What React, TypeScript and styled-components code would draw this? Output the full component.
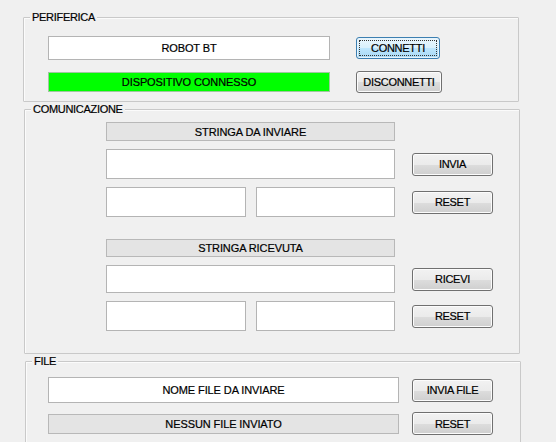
import React from "react";
import styled, { createGlobalStyle, css } from "styled-components";

const Global = createGlobalStyle`
  html, body { margin: 0; padding: 0; background: #f0f0f0; }
  body { font-family: "Liberation Sans", Arial, sans-serif; font-size: 11px; color: #000; }
`;

const Page = styled.div`
  width: 556px;
  height: 442px;
  overflow: hidden;
  padding: 17px 0 0 23px;
  box-sizing: border-box;
  display: flex;
  flex-direction: column;
  gap: 7px;
`;

const Frame = styled.section<{ $w: number; $h: number; $shift?: number }>`
  position: relative;
  flex-shrink: 0;
  box-sizing: border-box;
  width: ${(p) => p.$w}px;
  height: ${(p) => p.$h}px;
  margin-left: ${(p) => p.$shift ?? 0}px;
  border: 1px solid #c9c9c9;
  box-shadow: inset 1px 1px 0 #fbfbfb;
  border-radius: 1px;
`;

const Legend = styled.span`
  position: absolute;
  top: -7px;
  left: 6px;
  padding: 0 2px;
  background: #f0f0f0;
  line-height: 13px;
  font-size: 11px;
  letter-spacing: -0.3px;
  -webkit-text-stroke: 0.2px #000;
`;

const Grid = styled.div<{ $cols: string; $gap: number; $pt: number; $pl: number; $rowGap: number }>`
  display: grid;
  grid-template-columns: ${(p) => p.$cols};
  column-gap: ${(p) => p.$gap}px;
  row-gap: ${(p) => p.$rowGap}px;
  align-items: center;
  padding: ${(p) => p.$pt}px 0 0 ${(p) => p.$pl}px;
`;

const Section = styled.div`
  display: flex;
  flex-direction: column;
`;

const boxBase = css`
  box-sizing: border-box;
  display: flex;
  align-items: center;
  justify-content: center;
  font-size: 11px;
  letter-spacing: -0.1px;
  -webkit-text-stroke: 0.2px #000;
`;

const Field = styled.div<{ $h: number }>`
  ${boxBase}
  height: ${(p) => p.$h}px;
  background: #ffffff;
  border: 1px solid #b4b4b4;
`;

const StatusBox = styled.div<{ $h: number; $ok?: boolean }>`
  ${boxBase}
  height: ${(p) => p.$h}px;
  background: ${(p) => (p.$ok ? "#00ff00" : "#e4e4e4")};
  border: 1px solid ${(p) => (p.$ok ? "#9fc79f" : "#b8b8b8")};
`;

const Pair = styled.div`
  display: grid;
  grid-template-columns: 140px 1fr;
  column-gap: 10px;
`;

const Button = styled.button<{ $w?: number; $h?: number; $primary?: boolean }>`
  box-sizing: border-box;
  width: ${(p) => p.$w ?? 81}px;
  height: ${(p) => p.$h ?? 23}px;
  padding: 0;
  font-family: "Liberation Sans", Arial, sans-serif;
  font-size: 11px;
  letter-spacing: -0.3px;
  -webkit-text-stroke: 0.2px #000;
  color: #000;
  border-radius: 3px;
  border: 1px solid #707070;
  background: linear-gradient(#f2f2f2 0%, #ebebeb 50%, #dddddd 51%, #cfcfcf 100%);
  box-shadow: inset 0 0 0 1px #fcfcfc;
  position: relative;
  ${(p) =>
    p.$primary &&
    css`
      border-color: #3c7fb1;
      background: linear-gradient(#eaf6fd 0%, #d9f0fc 50%, #bee6fd 51%, #a7d9f5 100%);
      box-shadow: inset 0 0 0 1px #e8f4fb;
      &::after {
        content: "";
        position: absolute;
        inset: 2px;
        border: 1px dotted #333;
      }
    `}
`;

const RightCol = styled.div`
  display: flex;
  justify-content: flex-start;
`;

export default function App() {
  return (
    <>
      <Global />
      <Page>
        <Frame $w={496} $h={85} $shift={0}>
          <Legend>PERIFERICA</Legend>
          <Grid $cols="282px auto" $gap={26} $pt={18} $pl={24} $rowGap={11}>
            <Field $h={24}>ROBOT BT</Field>
            <RightCol>
              <Button $w={84} $h={22} $primary>CONNETTI</Button>
            </RightCol>
            <StatusBox $h={20} $ok>DISPOSITIVO CONNESSO</StatusBox>
            <RightCol>
              <Button $w={86} $h={22}>DISCONNETTI</Button>
            </RightCol>
          </Grid>
        </Frame>

        <Frame $w={496} $h={245} $shift={1}>
          <Legend>COMUNICAZIONE</Legend>
          <Section>
            <Grid $cols="289px 81px" $gap={17} $pt={12} $pl={81} $rowGap={8}>
              <StatusBox $h={19}>STRINGA DA INVIARE</StatusBox>
              <span />
              <Field $h={30} />
              <Button>INVIA</Button>
              <Pair>
                <Field $h={30} />
                <Field $h={30} />
              </Pair>
              <Button>RESET</Button>
            </Grid>
            <Grid $cols="289px 81px" $gap={17} $pt={22} $pl={81} $rowGap={8}>
              <StatusBox $h={18}>STRINGA RICEVUTA</StatusBox>
              <span />
              <Field $h={28} />
              <Button>RICEVI</Button>
              <Pair>
                <Field $h={30} />
                <Field $h={30} />
              </Pair>
              <Button>RESET</Button>
            </Grid>
          </Section>
        </Frame>

        <Frame $w={496} $h={100} $shift={2}>
          <Legend>FILE</Legend>
          <Grid $cols="351px 81px" $gap={13} $pt={15} $pl={22} $rowGap={9}>
            <Field $h={26}>NOME FILE DA INVIARE</Field>
            <Button>INVIA FILE</Button>
            <StatusBox $h={20}>NESSUN FILE INVIATO</StatusBox>
            <Button>RESET</Button>
          </Grid>
        </Frame>
      </Page>
    </>
  );
}
